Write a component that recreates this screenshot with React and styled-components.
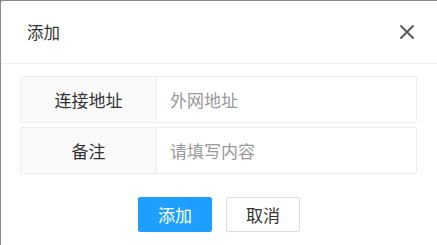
import React from "react";
import styled, { createGlobalStyle } from "styled-components";

const Global = createGlobalStyle`
  html, body {
    margin: 0;
    padding: 0;
    background: #8a8a8a;
    font-family: "Noto Sans CJK SC", "Noto Sans", sans-serif;
  }
`;

const Dialog = styled.div`
  margin: 1px 0 0 1px;
  height: 244px;
  background: #fff;
  border-top-left-radius: 2px;
  display: flex;
  flex-direction: column;
`;

const Header = styled.div`
  height: 62px;
  display: flex;
  align-items: center;
  justify-content: space-between;
  padding: 0 22px 0 26px;
  border-bottom: 1px solid #eeeeee;
`;

const Title = styled.div`
  font-size: 16.5px;
  color: #333;
`;

const Close = styled.button`
  border: 0;
  background: none;
  padding: 0;
  width: 16px;
  height: 16px;
  display: flex;
  align-items: center;
  justify-content: center;
  cursor: pointer;
`;

const Body = styled.div`
  padding: 12px 20px 0 19px;
  display: flex;
  flex-direction: column;
  gap: 4px;
`;

const Row = styled.div`
  display: flex;
  height: 45px;
  border: 1px solid #eeeeee;
  border-radius: 2px;
`;

const Label = styled.div`
  width: 135px;
  background: #fafafa;
  border-right: 1px solid #eeeeee;
  display: flex;
  align-items: center;
  justify-content: center;
  font-size: 17px;
  color: #333;
`;

const Input = styled.input`
  flex: 1;
  border: 0;
  outline: none;
  padding: 0 13px;
  font-family: inherit;
  font-size: 17px;
  color: #333;
  background: #fff;
  &::placeholder {
    color: #999;
  }
`;

const Footer = styled.div`
  display: flex;
  justify-content: center;
  gap: 14px;
  margin-top: 23px;
`;

const Button = styled.button`
  width: 74px;
  height: 35px;
  padding: 0;
  border-radius: 2px;
  font-family: inherit;
  font-size: 17px;
  cursor: pointer;
  border: 1px solid ${(p) => (p.$primary ? "#1e9fff" : "#dedede")};
  background: ${(p) => (p.$primary ? "#1e9fff" : "#fff")};
  color: ${(p) => (p.$primary ? "#fff" : "#333")};
`;

export default function App() {
  return (
    <>
      <Global />
      <Dialog>
        <Header>
          <Title>添加</Title>
          <Close aria-label="close">
            <svg width="14" height="14" viewBox="0 0 14 14">
              <path d="M1 1L13 13M13 1L1 13" stroke="#555" strokeWidth="1.8" strokeLinecap="round" />
            </svg>
          </Close>
        </Header>
        <Body>
          <Row>
            <Label>连接地址</Label>
            <Input placeholder="外网地址" />
          </Row>
          <Row>
            <Label>备注</Label>
            <Input placeholder="请填写内容" />
          </Row>
        </Body>
        <Footer>
          <Button $primary>添加</Button>
          <Button>取消</Button>
        </Footer>
      </Dialog>
    </>
  );
}
